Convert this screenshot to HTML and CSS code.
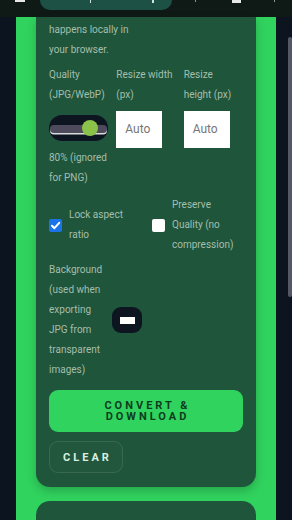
FILE: index.html
```html
<!DOCTYPE html>
<html lang="en">
<head>
<meta charset="utf-8">
<meta name="viewport" content="width=device-width, initial-scale=1">
<title>Image Converter</title>
<link rel="stylesheet" href="styles.css">
</head>
<body>
<header class="topbar">
  <span class="menu-mark"></span>
  <div class="title-pill"><span class="pill-mark m1"></span><span class="pill-mark m2"></span></div>
  <span class="tick t1"></span>
  <span class="tick t2"></span>
  <span class="tick t3"></span>
</header>
<main class="panel">
  <section class="card">
    <p class="intro">happens locally in your browser.</p>
    <div class="opts">
      <div class="opt">
        <label class="lbl">Quality (JPG/WebP)</label>
        <div class="slider">
          <div class="track"></div>
          <div class="thumb"></div>
        </div>
        <div class="hint">80% (ignored for PNG)</div>
      </div>
      <div class="opt">
        <label class="lbl">Resize width (px)</label>
        <div class="field">Auto</div>
      </div>
      <div class="opt">
        <label class="lbl">Resize height (px)</label>
        <div class="field">Auto</div>
      </div>
    </div>
    <div class="checks">
      <div class="check">
        <span class="box on"><svg viewBox="0 0 13 13" width="13" height="13"><path d="M3 6.8 L5.4 9.2 L10.2 3.8" fill="none" stroke="#fff" stroke-width="2" stroke-linecap="round" stroke-linejoin="round"/></svg></span>
        <span class="ctext">Lock aspect ratio</span>
      </div>
      <div class="check">
        <span class="box"></span>
        <span class="ctext">Preserve Quality (no compression)</span>
      </div>
    </div>
    <div class="bgrow">
      <span class="bglabel">Background (used when exporting JPG from transparent images)</span>
      <span class="swatch"><span class="swatch-color"></span></span>
    </div>
    <button class="btn-primary">CONVERT &amp; DOWNLOAD</button>
    <button class="btn-ghost">CLEAR</button>
  </section>
  <section class="card next"></section>
</main>
<div class="scrollbar"></div>
</body>
</html>
```
FILE: styles.css
```css
* { box-sizing: border-box; }
html, body { margin: 0; padding: 0; }
body {
  background: #0c1420;
  font-family: Roboto, "Noto Sans", sans-serif;
  width: 292px;
  height: 520px;
  overflow: hidden;
}
.topbar {
  height: 17px;
  background: #0f1a16;
  display: flex;
  align-items: flex-start;
}
.menu-mark {
  width: 10px;
  height: 2px;
  margin-left: 15px;
  background: #e6e6e6;
}
.title-pill {
  width: 132px;
  height: 10px;
  margin-left: 15px;
  background: #1d5146;
  border-radius: 0 0 12px 12px;
  display: flex;
  align-items: flex-start;
}
.pill-mark {
  width: 2px;
  height: 3px;
  background: #cfe3da;
}
.pill-mark.m1 { margin-left: 50px; width: 1px; }
.pill-mark.m2 { margin-left: 61px; }
.tick { height: 2px; background: #8a9490; }
.tick.t1 { width: 1px; margin-left: 23px; }
.tick.t2 { width: 9px; margin-left: 36px; background: #e8e8e8; height: 3px; }
.tick.t3 { width: 1px; margin-left: 33px; }
.panel {
  margin: 0 16px;
  background: #31d35f;
  padding: 0 20px;
  height: 503px;
}
.card {
  background: #1f553b;
  padding: 3px 13px 14px;
  border-radius: 0 0 14px 14px;
  box-shadow: 0 4px 10px rgba(0, 40, 10, 0.25);
  color: #a3bfad;
  font-size: 10px;
  line-height: 20px;
}
.card.next {
  margin-top: 14px;
  height: 19px;
  padding: 0;
  border-radius: 14px 14px 0 0;
  box-shadow: none;
}
.intro { margin: 0; width: 90px; }
.opts {
  margin-top: 5px;
  display: grid;
  grid-template-columns: 1fr 1fr 1fr;
  column-gap: 8px;
  align-items: start;
}
.opt { display: flex; flex-direction: column; }
.lbl { display: block; }
.slider {
  position: relative;
  margin-top: 10px;
  width: 59px;
  height: 26px;
  background: #0d1521;
  border-radius: 13px;
  display: flex;
  align-items: center;
  padding-left: 1px;
}
.track {
  width: 57px;
  height: 8px;
  margin-top: 1px;
  background: #4c4a5b;
  border-radius: 4px;
  box-shadow: 0 1.5px 0 #dcdcdc;
}
.thumb {
  position: absolute;
  left: 33px;
  top: 5px;
  width: 16px;
  height: 16px;
  border-radius: 50%;
  background: #8bc34a;
}
.hint { margin-top: 7px; }
.field {
  margin-top: 6px;
  width: 46px;
  height: 37px;
  background: #fff;
  color: #777;
  font-size: 12px;
  line-height: 37px;
  padding-left: 9px;
}
.checks {
  margin-top: 7px;
  display: grid;
  grid-template-columns: 1fr 1fr;
  column-gap: 12px;
  align-items: center;
}
.check {
  display: flex;
  align-items: center;
  gap: 7px;
}
.box {
  flex: none;
  width: 13px;
  height: 13px;
  border-radius: 2px;
  background: #fff;
  display: flex;
}
.box.on { background: #1a73e8; }
.bgrow {
  margin-top: 5px;
  display: flex;
  align-items: center;
  gap: 8px;
}
.bglabel { width: 55px; }
.swatch {
  width: 30px;
  height: 26px;
  border-radius: 9px;
  background: #0d1521;
  display: flex;
  align-items: center;
  justify-content: center;
}
.swatch-color {
  width: 15px;
  height: 7px;
  background: #fff;
}
button {
  font-family: Roboto, "Noto Sans", sans-serif;
  font-weight: 700;
  font-size: 11px;
  letter-spacing: 3px;
  cursor: pointer;
  display: block;
}
.btn-primary {
  margin-top: 10px;
  width: 100%;
  height: 42px;
  border: none;
  border-radius: 9px;
  background: #31d35f;
  color: #0c3d1e;
  line-height: 11px;
  padding: 0 20px 0 23px;
}
.btn-ghost {
  margin-top: 9px;
  width: 74px;
  height: 32px;
  border: 1px solid rgba(255, 255, 255, 0.1);
  border-radius: 9px;
  background: rgba(255, 255, 255, 0.015);
  color: #d9efe0;
  padding: 0 0 0 3px;
}
.scrollbar {
  position: absolute;
  right: 0;
  top: 37px;
  width: 4px;
  height: 260px;
  background: #535864;
  border-radius: 2px;
}
```
